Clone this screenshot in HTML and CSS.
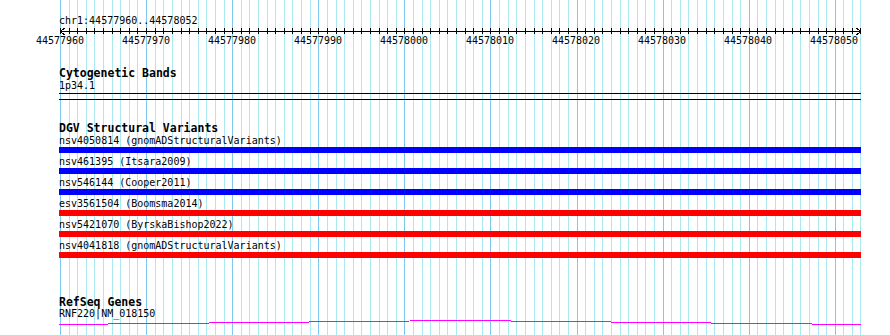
FILE: index.html
```html
<!DOCTYPE html>
<html lang="en">
<head>
    <meta charset="UTF-8">
    <meta name="viewport" content="width=device-width, initial-scale=1.0">
    <title>Genome Browser - chr1:44577960..44578052</title>
    <link rel="stylesheet" href="styles.css">
</head>
<body>

    <div class="browser">

        <!-- Base grid, one line per base pair -->
        <div class="gridlines">
            <span></span><span></span><span></span><span></span><span></span><span></span><span></span><span></span><span></span><span></span>
            <span></span><span></span><span></span><span></span><span></span><span></span><span></span><span></span><span></span><span></span>
            <span></span><span></span><span></span><span></span><span></span><span></span><span></span><span></span><span></span><span></span>
            <span></span><span></span><span></span><span></span><span></span><span></span><span></span><span></span><span></span><span></span>
            <span></span><span></span><span></span><span></span><span></span><span></span><span></span><span></span><span></span><span></span>
            <span></span><span></span><span></span><span></span><span></span><span></span><span></span><span></span><span></span><span></span>
            <span></span><span></span><span></span><span></span><span></span><span></span><span></span><span></span><span></span><span></span>
            <span></span><span></span><span></span><span></span><span></span><span></span><span></span><span></span><span></span><span></span>
            <span></span><span></span><span></span><span></span><span></span><span></span><span></span><span></span><span></span><span></span>
            <span></span><span></span><span></span>
        </div>

        <div class="tracks">

            <!-- Ruler -->
            <div class="ruler">
                <div class="ruler-label">chr1:44577960..44578052</div>
                <div class="axis">
                    <span></span><span></span><span></span><span></span><span></span><span></span><span></span><span></span><span></span><span></span>
                    <span></span><span></span><span></span><span></span><span></span><span></span><span></span><span></span><span></span><span></span>
                    <span></span><span></span><span></span><span></span><span></span><span></span><span></span><span></span><span></span><span></span>
                    <span></span><span></span><span></span><span></span><span></span><span></span><span></span><span></span><span></span><span></span>
                    <span></span><span></span><span></span><span></span><span></span><span></span><span></span><span></span><span></span><span></span>
                    <span></span><span></span><span></span><span></span><span></span><span></span><span></span><span></span><span></span><span></span>
                    <span></span><span></span><span></span><span></span><span></span><span></span><span></span><span></span><span></span><span></span>
                    <span></span><span></span><span></span><span></span><span></span><span></span><span></span><span></span><span></span><span></span>
                    <span></span><span></span><span></span><span></span><span></span><span></span><span></span><span></span><span></span><span></span>
                    <span></span><span></span><span></span>
                    <svg class="arrow arrow-left" width="5" height="7" viewBox="0 0 5 7">
                        <polyline points="4.5,0 0.5,3.5 4.5,7" />
                    </svg>
                    <svg class="arrow arrow-right" width="5" height="7" viewBox="0 0 5 7">
                        <polyline points="0.5,0 4.5,3.5 0.5,7" />
                    </svg>
                </div>
                <div class="ruler-numbers">
                    <span>44577960</span>
                    <span>44577970</span>
                    <span>44577980</span>
                    <span>44577990</span>
                    <span>44578000</span>
                    <span>44578010</span>
                    <span>44578020</span>
                    <span>44578030</span>
                    <span>44578040</span>
                    <span>44578050</span>
                </div>
            </div>

            <!-- Cytogenetic Bands -->
            <div class="track track-cyto">
                <div class="track-title">Cytogenetic Bands</div>
                <div class="feature-label">1p34.1</div>
                <div class="cytoband"></div>
            </div>

            <!-- DGV Structural Variants -->
            <div class="track track-dgv">
                <div class="track-title">DGV Structural Variants</div>
                <div class="feature">
                    <div class="feature-label">nsv4050814 (gnomADStructuralVariants)</div>
                    <div class="bar loss"></div>
                </div>
                <div class="feature">
                    <div class="feature-label">nsv461395 (Itsara2009)</div>
                    <div class="bar loss"></div>
                </div>
                <div class="feature">
                    <div class="feature-label">nsv546144 (Cooper2011)</div>
                    <div class="bar loss"></div>
                </div>
                <div class="feature">
                    <div class="feature-label">esv3561504 (Boomsma2014)</div>
                    <div class="bar gain"></div>
                </div>
                <div class="feature">
                    <div class="feature-label">nsv5421070 (ByrskaBishop2022)</div>
                    <div class="bar gain"></div>
                </div>
                <div class="feature">
                    <div class="feature-label">nsv4041818 (gnomADStructuralVariants)</div>
                    <div class="bar gain"></div>
                </div>
            </div>

            <!-- RefSeq Genes -->
            <div class="track track-refseq">
                <div class="track-title">RefSeq Genes</div>
                <div class="feature-label gene-label">RNF220|NM_018150</div>
                <svg class="intron" width="802" height="6" viewBox="0 0 802 6">
                    <polyline points="0,4.5 401,0.5 802,4.5" />
                </svg>
            </div>

        </div>
    </div>

</body>
</html>
```

FILE: styles.css
```css
body {
    margin: 0;
    background-color: #fff;
    font-family: "DejaVu Sans Mono", monospace;
    font-size: 10px;
    line-height: 12px;
    color: #000;
}

.browser {
    position: relative;
    width: 890px;
    height: 335px;
    overflow: hidden;
}

/* Grid lines behind the tracks */
.gridlines {
    position: absolute;
    top: 0;
    left: 60px;
    width: 800px;
    height: 100%;
    display: flex;
    border-right: 1px solid #aae9f0;
}

.gridlines span {
    flex: 1;
    border-left: 1px solid #aae9f0;
}

.gridlines span:nth-child(10n+1) {
    border-left-color: #7fc8ee;
}

.tracks {
    position: relative;
    width: 802px;
    padding: 15px 0 0 59px;
}

/* Ruler */
.axis {
    position: relative;
    display: flex;
    width: 800px;
    height: 6px;
    margin: 1px 0 0 1px;
    border-right: 1px solid #000;
}

.axis::before {
    content: "";
    position: absolute;
    left: 0;
    right: -1px;
    top: 3px;
    height: 1px;
    background-color: #000;
}

.axis span {
    flex: 1;
    border-left: 1px solid #000;
}

.arrow {
    position: absolute;
    top: 0;
    fill: none;
    stroke: #000;
    stroke-width: 1;
    shape-rendering: crispEdges;
}

.arrow-left {
    left: 0;
}

.arrow-right {
    right: -1px;
}

.ruler-numbers {
    display: flex;
    margin: 1px 0 0 -42px;
}

.ruler-numbers span {
    width: 86px;
    flex: none;
    text-align: center;
}

/* Tracks */
.track-title {
    font-weight: bold;
    font-size: 11.5px;
    line-height: 14px;
}

.track-cyto {
    margin-top: 19px;
}

.cytoband {
    height: 7px;
    margin-top: 1px;
    box-sizing: border-box;
    border-top: 1px solid #000;
    border-bottom: 1px solid #000;
}

.track-dgv {
    margin-top: 21px;
}

.feature {
    margin-bottom: 3px;
}

.bar {
    height: 6px;
}

.bar.loss {
    background-color: #0000ff;
}

.bar.gain {
    background-color: #ff0000;
}

/* last feature's bottom margin collapses into this one */
.track-refseq {
    margin-top: 37px;
}

.gene-label {
    margin-top: -1px;
}

.intron {
    display: block;
}

.intron polyline {
    fill: none;
    stroke: #ff00ff;
    stroke-width: 1;
    shape-rendering: crispEdges;
}
```
